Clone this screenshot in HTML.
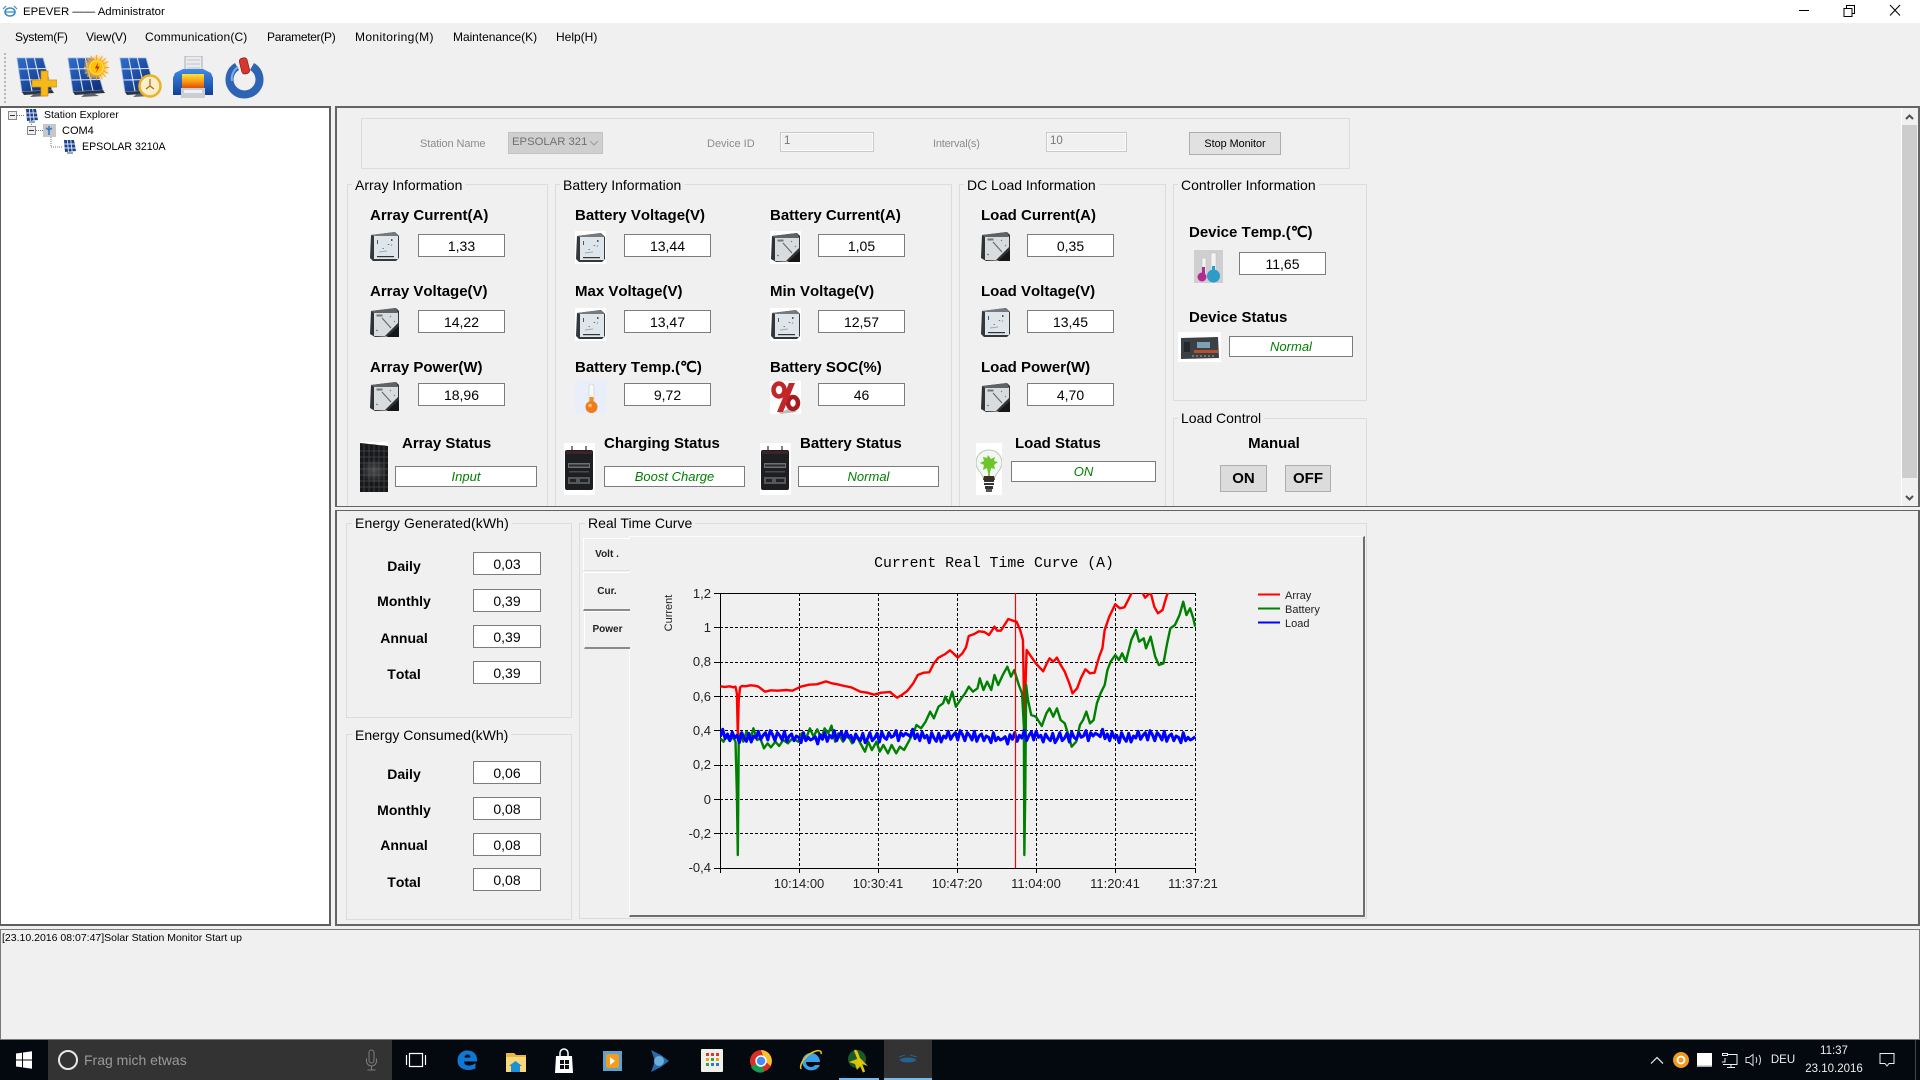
<!DOCTYPE html>
<html><head><meta charset="utf-8"><title>EPEVER — Administrator</title>
<style>
html,body{margin:0;padding:0;background:#f0f0f0}
#r{position:relative;width:1920px;height:1080px;overflow:hidden;background:#f0f0f0;font-family:"Liberation Sans",sans-serif;color:#000}
#r div,#r svg.a{position:absolute}
.t{white-space:nowrap;line-height:20px;height:20px}
.m{font-size:12px;top:27px}
.l{font-weight:bold;font-size:15px;white-space:nowrap;line-height:22px;height:20px;font-kerning:none}
.e{font-weight:bold;font-size:14px;white-space:nowrap;line-height:20px;height:20px;width:80px;left:364px;text-align:center;font-kerning:none}
.v{background:#fff;border:1px solid #7c7c7c;box-sizing:border-box;text-align:center;font-size:14px;height:23px;line-height:22px}
.s{background:#fff;border:1px solid #7c7c7c;box-sizing:border-box;text-align:center;font-size:13px;font-style:italic;color:#008000;height:21px;line-height:20px}
.g{border:1px solid #dcdcdc;box-sizing:border-box}
.gl{font-size:14px;background:#f0f0f0;padding:0 3px;line-height:18px;height:18px;white-space:nowrap}
.d{font-size:11px;color:#8c8c8c;white-space:nowrap;line-height:16px}
.btn{background:#e1e1e1;border:1px solid #adadad;box-sizing:border-box;text-align:center}
.tab{background:#f0f0f0;font-size:10px;font-weight:bold;color:#222;text-align:center;box-sizing:border-box}
</style></head><body>
<div id="r">
<svg width="0" height="0" style="position:absolute"><defs>
<linearGradient id="bl" x1="0" y1="0" x2="1" y2="1"><stop offset="0" stop-color="#2f6fd0"/><stop offset="1" stop-color="#0c2a72"/></linearGradient>
<linearGradient id="org" x1="0" y1="0" x2="0" y2="1"><stop offset="0" stop-color="#ffe23a"/><stop offset=".5" stop-color="#fb9a12"/><stop offset="1" stop-color="#d9430a"/></linearGradient>
<linearGradient id="pb" x1="0" y1="0" x2="0" y2="1"><stop offset="0" stop-color="#3f8ae6"/><stop offset="1" stop-color="#103f9a"/></linearGradient>
<radialGradient id="sun"><stop offset="0" stop-color="#ffd400"/><stop offset=".55" stop-color="#ffb000"/><stop offset="1" stop-color="#ffd9a0" stop-opacity=".2"/></radialGradient>
<clipPath id="pl"><rect x="720" y="593" width="476" height="276"/></clipPath>
<symbol id="sp" viewBox="0 0 41 40">
<polygon points="1,1 27,1 36,33 6,35" fill="url(#bl)" stroke="#9fb4d6" stroke-width=".8"/>
<path d="M9.7 1 16 34.4M18.3 1 26 33.7M2.7 12 30 11.5M4.3 23 33 22.5" stroke="#dbe6f6" stroke-width="1.1" fill="none"/>
<polygon points="6,35 36,33 38,36 8,38" fill="#2a3342"/><polygon points="18,37 26,36 32,39 14,40" fill="#5a6270"/>
</symbol>
<symbol id="msp" viewBox="0 0 14 14">
<polygon points="1,0 11,0 13,11 2,12" fill="#1c3f8f"/><path d="M4.3 0 5.5 12M7.7 0 9.2 12M1.3 4 11.8 4M1.6 8 12.5 8" stroke="#dfe8f6" stroke-width=".9"/><rect x="4" y="12" width="6" height="2" fill="#9aa"/>
</symbol>
<symbol id="m1" viewBox="0 0 29 29">
<polygon points="1,3 25,0 29,4 29,26 26,29 3,29 0,26" fill="#33383c"/><rect x="4" y="4" width="24" height="23" fill="#dfe6eb"/>
<polygon points="1,3 25,0 28,4 4,4" fill="#747a80"/><path d="M7 8h1v4H7zM12 17l1.5-1 .6 1zM17 13l2-1 .4 1zM21 7h1.5v2H21z" fill="#555"/><path d="M9 20l8-1M22 12l-1 2" stroke="#9ab" stroke-width="1"/>
<rect x="7" y="24" width="17" height="1.2" fill="#333"/>
</symbol>
<symbol id="m2" viewBox="0 0 29 29">
<polygon points="1,3 26,0 29,3 29,28 5,29 0,26" fill="#303336"/><polygon points="4,5 28,4 28,15 15,28 4,28" fill="#d9dcde"/>
<polygon points="1,3 26,0 28,5 4,5" fill="#5e6367"/><path d="M7 7h5v1H7zM6 22l2 1M20 8l1 1M24 13l1 1" stroke="#777" stroke-width="1"/>
<path d="M12 10 21 20" stroke="#666" stroke-width="1.1"/><polygon points="29,18 29,29 17,29" fill="#161616"/>
</symbol>
<symbol id="bat" viewBox="0 0 31 52">
<rect width="31" height="52" fill="#fff"/><path d="M8 3v5M22 3v5" stroke="#555" stroke-width="1.5"/><rect x="1" y="7" width="28" height="40" rx="2" fill="#1c1e22"/>
<rect x="2" y="8" width="26" height="3" fill="#3f2227"/><rect x="4" y="20" width="22" height="5" fill="#6c7074"/><rect x="5" y="21.500" width="20" height="2" fill="#2a2a2a"/><rect x="5" y="28" width="20" height="1.500" fill="#4a4a4a"/><rect x="4" y="34" width="22" height="7" fill="#55585b"/><rect x="6" y="36" width="6" height="3" fill="#222"/><rect x="16" y="36" width="8" height="3" fill="#222"/>
</symbol>
</defs></svg>

<!-- title bar -->
<div style="left:0;top:0;width:1920px;height:23px;background:#fff"></div>
<svg class="a" style="left:2px;top:5px" width="16" height="13" viewBox="0 0 16 13"><ellipse cx="8" cy="7" rx="5" ry="4" fill="none" stroke="#3a8ac4" stroke-width="1.6"/><path d="M1 4 4 1M15 4 12 1M3 7h10" stroke="#3a8ac4" stroke-width="1.2"/></svg>
<div class="t" style="left:23px;top:2px;font-size:11.400px">EPEVER —— Administrator</div>
<svg class="a" style="left:1795px;top:3px" width="120" height="16" viewBox="0 0 120 16"><path d="M4 7.5h10" stroke="#000"/><path d="M49 5.500v8h8v-8zM51.500 5.500v-3h8v8h-2.500" fill="none" stroke="#000"/><path d="M95 2 105 12.500M105 2 95 12.500" stroke="#000"/></svg>

<!-- menu -->
<div class="t m" style="left:15px;letter-spacing:-.3px">System(F)</div>
<div class="t m" style="left:86px;letter-spacing:-.15px">View(V)</div>
<div class="t m" style="left:145px;letter-spacing:.15px">Communication(C)</div>
<div class="t m" style="left:267px;letter-spacing:-.3px">Parameter(P)</div>
<div class="t m" style="left:355px;letter-spacing:.37px">Monitoring(M)</div>
<div class="t m" style="left:453px;letter-spacing:-.05px">Maintenance(K)</div>
<div class="t m" style="left:556px">Help(H)</div>

<!-- toolbar -->
<div style="left:4px;top:53px;height:50px;width:0;border-left:2px dotted #b8b8b8"></div>
<svg class="a" style="left:16px;top:57px" width="41" height="40"><use href="#sp"/><path d="M27 14h7v9h9v7h-9v9h-7v-9h-9v-7h9z" transform="translate(-2 0)" fill="#f7b81c" stroke="#c98a10" stroke-width=".7"/></svg>
<svg class="a" style="left:67px;top:57px" width="41" height="40"><use href="#sp"/></svg>
<svg class="a" style="left:83px;top:54px" width="27" height="27" viewBox="0 0 32 32"><circle cx="16" cy="16" r="15" fill="url(#sun)"/><g stroke="#f8a51c" stroke-width="1.1"><path d="M16 1v30M1 16h30M5 5l22 22M27 5 5 27M9 2l14 28M23 2 9 30M2 9l28 14M30 9 2 23"/></g><circle cx="16" cy="16" r="8" fill="#ffc400" stroke="#ffe680"/><path d="M18 10l-4 7h3l-2 5 5-7h-3z" fill="#c8261a"/></svg>
<svg class="a" style="left:119px;top:57px" width="41" height="40"><use href="#sp"/></svg>
<svg class="a" style="left:136px;top:72px" width="28" height="28"><circle cx="14" cy="14" r="10.500" fill="#fbeec8" stroke="#e8b22c" stroke-width="2.500"/><path d="M14 7v7l-4 3M14 14l4 3" stroke="#a06a20" stroke-width="1.200" fill="none"/></svg>
<svg class="a" style="left:172px;top:56px" width="42" height="43" viewBox="0 0 42 43"><rect x="13" y="0" width="17" height="19" fill="#e8eaec" stroke="#aab"/><path d="M15 4h13M15 8h13M15 12h13" stroke="#c4c4c4"/><path d="M3 17 11 13h20l8 4 2 5v17H1V22z" fill="url(#pb)"/><rect x="10" y="18" width="22" height="15" fill="url(#org)"/><rect x="9" y="32" width="24" height="10" fill="#c9ced1"/><rect x="12" y="34" width="18" height="3" fill="#eef"/></svg>
<svg class="a" style="left:225px;top:56px" width="40" height="43" viewBox="0 0 40 43"><path d="M12 10.500a15 15 0 1 0 15 0" fill="none" stroke="#2f63b4" stroke-width="8"/><path d="M13 11a14 14 0 0 0-6 14" fill="none" stroke="#7eaee8" stroke-width="2"/><rect x="15.500" y="2" width="8" height="16" rx="3" transform="rotate(-14 19 10)" fill="#d6362c" stroke="#8c1a14" stroke-width=".7"/></svg>

<!-- left tree -->
<div style="left:0;top:106px;width:331px;height:820px;background:#fff;border:1px solid #5f5f5f;border-width:2px 2px 2px 1px;box-sizing:border-box"></div>
<svg class="a" style="left:0;top:106px" width="100" height="50" viewBox="0 0 100 50">
<rect x="8.500" y="5.500" width="8" height="8" fill="#eee" stroke="#8a8a8a"/><path d="M10 9.500h5" stroke="#333"/>
<rect x="27.500" y="20.500" width="8" height="8" fill="#eee" stroke="#8a8a8a"/><path d="M29 24.500h5" stroke="#333"/>
<path d="M17 9.500h7M31.500 14v6M36 24.500h7M51 31v10h11" stroke="#777" stroke-dasharray="1 1" fill="none"/>
<rect x="43" y="18" width="13" height="13" fill="#c7c7c7"/><path d="M49 20v9M46 22l3 2 3-2" stroke="#3b7cc0" stroke-width="1.600" fill="none"/>
</svg>
<svg class="a" style="left:25px;top:109px" width="14" height="14"><use href="#msp"/></svg>
<svg class="a" style="left:63px;top:140px" width="14" height="14"><use href="#msp"/></svg>
<div class="t" style="left:44px;top:105px;font-size:10.500px">Station Explorer</div>
<div class="t" style="left:62px;top:121px;font-size:11px">COM4</div>
<div class="t" style="left:82px;top:137px;font-size:10.600px">EPSOLAR 3210A</div>

<!-- right top panel -->
<div style="left:335px;top:106px;width:1585px;height:401px;border:2px solid #646464;border-width:2px 2px 1px 2px;box-sizing:border-box"></div>
<div style="left:335px;top:510px;width:1585px;height:416px;border:2px solid #646464;border-width:1px 2px 2px 2px;box-sizing:border-box"></div>
<!-- scrollbar -->
<div style="left:1901px;top:108px;width:16px;height:398px;background:#f0f0f0;border-left:1px solid #fff"></div>
<div style="left:1902px;top:125px;width:15px;height:353px;background:#cdcdcd"></div>
<svg class="a" style="left:1902px;top:108px" width="15" height="398"><path d="M4 11 7.500 7.500 11 11" fill="none" stroke="#505050" stroke-width="2"/><path d="M4 388 7.500 391.500 11 388" fill="none" stroke="#505050" stroke-width="2"/></svg>

<!-- station bar -->
<div class="g" style="left:361px;top:118px;width:989px;height:51px"></div>
<div class="d" style="left:420px;top:136px;letter-spacing:-.1px">Station Name</div>
<div style="left:508px;top:132px;width:95px;height:22px;background:#cfcfcf;border:1px solid #c2c2c2;box-sizing:border-box;font-size:11.300px;line-height:19px;color:#707070;padding-left:3px">EPSOLAR 321</div>
<svg class="a" style="left:589px;top:140px" width="10" height="7"><path d="M1 1 5 5 9 1" fill="none" stroke="#9a9a9a"/></svg>
<div class="d" style="left:707px;top:136px">Device ID</div>
<div style="left:780px;top:132px;width:94px;height:20px;background:#f0f0f0;border:1px solid #c9c9c9;box-shadow:inset 0 0 0 1px #fafafa;box-sizing:border-box;font-size:11.500px;line-height:17px;color:#777;padding-left:3px">1</div>
<div class="d" style="left:933px;top:136px;letter-spacing:-.2px">Interval(s)</div>
<div style="left:1046px;top:132px;width:81px;height:20px;background:#f0f0f0;border:1px solid #c9c9c9;box-shadow:inset 0 0 0 1px #fafafa;box-sizing:border-box;font-size:11.500px;line-height:17px;color:#777;padding-left:3px">10</div>
<div class="btn" style="left:1189px;top:132px;width:92px;height:23px;font-size:10.800px;line-height:22px">Stop Monitor</div>

<!-- groups top -->
<div class="g" style="left:347px;top:184px;width:201px;height:322px;border-bottom:none"></div>
<div class="gl" style="left:352px;top:176px">Array Information</div>
<div class="g" style="left:555px;top:184px;width:397px;height:322px;border-bottom:none"></div>
<div class="gl" style="left:560px;top:176px">Battery Information</div>
<div class="g" style="left:959px;top:184px;width:207px;height:322px;border-bottom:none"></div>
<div class="gl" style="left:964px;top:176px;letter-spacing:-.03px">DC Load Information</div>
<div class="g" style="left:1173px;top:184px;width:194px;height:217px"></div>
<div class="gl" style="left:1178px;top:176px">Controller Information</div>
<div class="g" style="left:1173px;top:418px;width:194px;height:88px;border-bottom:none"></div>
<div class="gl" style="left:1178px;top:409px">Load Control</div>

<!-- array -->
<div class="l" style="left:370px;top:205px">Array Current(A)</div>
<svg class="a" style="left:370px;top:232px" width="29" height="29"><use href="#m1"/></svg>
<div class="v" style="left:418px;top:234px;width:87px">1,33</div>
<div class="l" style="left:370px;top:281px">Array Voltage(V)</div>
<svg class="a" style="left:370px;top:308px" width="29" height="29"><use href="#m2"/></svg>
<div class="v" style="left:418px;top:310px;width:87px">14,22</div>
<div class="l" style="left:370px;top:357px">Array Power(W)</div>
<svg class="a" style="left:370px;top:382px" width="29" height="29"><use href="#m2"/></svg>
<div class="v" style="left:418px;top:383px;width:87px">18,96</div>
<div class="l" style="left:402px;top:433px">Array Status</div>
<svg class="a" style="left:360px;top:442px" width="28" height="50" viewBox="0 0 28 50"><defs><radialGradient id="gl" cx=".5" cy=".55" r=".5"><stop offset="0" stop-color="#777" stop-opacity=".55"/><stop offset="1" stop-color="#777" stop-opacity="0"/></radialGradient></defs><rect width="28" height="50" fill="#fff"/><polygon points="0,1 28,4 28,50 0,50" fill="#17181a"/><path d="M0 9h28M0 15h28M0 21h28M0 27h28M0 33h28M0 39h28M0 45h28M4 1v49M9 2v48M14 2v48M19 3v47M24 3v47" stroke="#45484c" stroke-width=".8"/><rect y="15" width="28" height="25" fill="url(#gl)"/></svg>
<div class="s" style="left:395px;top:466px;width:142px">Input</div>

<!-- battery -->
<div class="l" style="left:575px;top:205px">Battery Voltage(V)</div>
<svg class="a" style="left:575px;top:231px" width="31" height="33"><rect width="31" height="33" fill="#fff"/><use href="#m1" x="1" y="2" width="29" height="29"/></svg>
<div class="v" style="left:624px;top:234px;width:87px">13,44</div>
<div class="l" style="left:770px;top:205px">Battery Current(A)</div>
<svg class="a" style="left:770px;top:231px" width="31" height="33"><rect width="31" height="33" fill="#fff"/><use href="#m2" x="1" y="2" width="29" height="29"/></svg>
<div class="v" style="left:818px;top:234px;width:87px">1,05</div>
<div class="l" style="left:575px;top:281px">Max Voltage(V)</div>
<svg class="a" style="left:575px;top:308px" width="31" height="33"><rect width="31" height="33" fill="#fff"/><use href="#m1" x="1" y="2" width="29" height="29"/></svg>
<div class="v" style="left:624px;top:310px;width:87px">13,47</div>
<div class="l" style="left:770px;top:281px">Min Voltage(V)</div>
<svg class="a" style="left:770px;top:308px" width="31" height="33"><rect width="31" height="33" fill="#fff"/><use href="#m1" x="1" y="2" width="29" height="29"/></svg>
<div class="v" style="left:818px;top:310px;width:87px">12,57</div>
<div class="l" style="left:575px;top:357px">Battery Temp.(℃)</div>
<svg class="a" style="left:575px;top:381px" width="31" height="33" viewBox="0 0 31 33"><rect width="31" height="33" fill="#e9effa"/><rect x="14" y="3" width="5" height="21" rx="2.500" fill="#f8f8f8" stroke="#c9c9c9" stroke-width=".6"/><rect x="14.500" y="16" width="4" height="9" fill="#f58a1e"/><circle cx="16.500" cy="26" r="6" fill="#f27a18"/><circle cx="15" cy="24.500" r="1.800" fill="#ffc27a"/></svg>
<div class="v" style="left:624px;top:383px;width:87px">9,72</div>
<div class="l" style="left:770px;top:357px">Battery SOC(%)</div>
<svg class="a" style="left:770px;top:381px" width="31" height="33" viewBox="0 0 31 33"><rect width="31" height="33" fill="#fff"/><polygon points="12,31 8,31 11,33 27,31 20,27" fill="#8f8f8f" opacity=".6"/><ellipse cx="9" cy="9" rx="5.500" ry="6.500" fill="none" stroke="#c2262a" stroke-width="4.500"/><ellipse cx="23" cy="22" rx="5" ry="6" fill="none" stroke="#a81c20" stroke-width="4.500"/><polygon points="19,2 25,2 13,31 7,31" fill="#c2262a"/></svg>
<div class="v" style="left:818px;top:383px;width:87px">46</div>
<div class="l" style="left:604px;top:433px">Charging Status</div>
<svg class="a" style="left:564px;top:443px" width="31" height="52"><use href="#bat"/></svg>
<div class="s" style="left:604px;top:466px;width:141px">Boost Charge</div>
<div class="l" style="left:800px;top:433px">Battery Status</div>
<svg class="a" style="left:760px;top:443px" width="31" height="52"><use href="#bat"/></svg>
<div class="s" style="left:798px;top:466px;width:141px">Normal</div>

<!-- load -->
<div class="l" style="left:981px;top:205px">Load Current(A)</div>
<svg class="a" style="left:981px;top:232px" width="29" height="29"><use href="#m2"/></svg>
<div class="v" style="left:1027px;top:234px;width:87px">0,35</div>
<div class="l" style="left:981px;top:281px">Load Voltage(V)</div>
<svg class="a" style="left:981px;top:308px" width="29" height="29"><use href="#m1"/></svg>
<div class="v" style="left:1027px;top:310px;width:87px">13,45</div>
<div class="l" style="left:981px;top:357px">Load Power(W)</div>
<svg class="a" style="left:981px;top:383px" width="29" height="29"><use href="#m2"/></svg>
<div class="v" style="left:1027px;top:383px;width:87px">4,70</div>
<div class="l" style="left:1015px;top:433px">Load Status</div>
<svg class="a" style="left:976px;top:443px" width="26" height="52" viewBox="0 0 26 52"><rect width="26" height="52" fill="#fff"/><path d="M13 7C5 7 0 13 0 20c0 7 7 10 8 17h10c1-7 8-10 8-17 0-7-5-13-13-13z" fill="#f2f7f2" stroke="#b9c9bc"/><path d="M13 36V22" stroke="#5a3" stroke-width="1.500"/><path d="M12 12l3 4 4-2-1 4 4 1-4 3 1 4-4-1-1 5h-2l-1-5-4 2 1-5-4-2 4-2-1-4 4 1z" fill="#6cc52a"/><path d="M8 37h10v2H8zM8 40h10v2H8zM9 43h8v3H9z" fill="#333"/><rect x="10" y="46" width="6" height="3" fill="#555"/><path d="M8 33h10l1 4H7z" fill="#3a2c20"/></svg>
<div class="s" style="left:1011px;top:461px;width:145px">ON</div>

<!-- controller -->
<div class="l" style="left:1189px;top:222px">Device Temp.(℃)</div>
<svg class="a" style="left:1194px;top:250px" width="29" height="33" viewBox="0 0 29 33"><rect width="29" height="33" fill="#cfcfcf"/><rect x="8" y="8" width="4" height="16" fill="#f3f3f3" stroke="#bbb" stroke-width=".5"/><rect x="17" y="3" width="5" height="20" fill="#f3f3f3" stroke="#bbb" stroke-width=".5"/><circle cx="8" cy="27" r="4.500" fill="#b52a92"/><rect x="8" y="17" width="3" height="8" fill="#b52a92"/><circle cx="19.500" cy="26" r="6.500" fill="#2e9cc8"/><rect x="18" y="16" width="3" height="8" fill="#2e9cc8"/></svg>
<div class="v" style="left:1239px;top:252px;width:87px">11,65</div>
<div class="l" style="left:1189px;top:307px">Device Status</div>
<svg class="a" style="left:1178px;top:332px" width="43" height="30" viewBox="0 0 43 30"><rect width="43" height="30" fill="#fff"/><polygon points="3,6 40,5 41,26 3,27" fill="#3a4044"/><rect x="19" y="10" width="13" height="6" fill="#7f9fb2"/><rect x="16" y="18" width="24" height="3" fill="#b5502a"/><rect x="6" y="10" width="6" height="10" fill="#23282b"/><path d="M14 24h22" stroke="#aaa" stroke-dasharray="2 2"/></svg>
<div class="s" style="left:1229px;top:336px;width:124px">Normal</div>
<div class="l" style="left:1234px;top:433px;width:80px;text-align:center">Manual</div>
<div class="btn l" style="left:1220px;top:465px;width:47px;height:27px;line-height:26px;background:#dcdcdc">ON</div>
<div class="btn l" style="left:1285px;top:465px;width:46px;height:27px;line-height:26px;background:#dcdcdc">OFF</div>

<!-- energy -->
<div class="g" style="left:346px;top:523px;width:226px;height:195px"></div>
<div class="gl" style="left:352px;top:514px;letter-spacing:.1px">Energy Generated(kWh)</div>
<div class="e" style="top:556px">Daily</div><div class="v" style="left:473px;top:552px;width:68px">0,03</div>
<div class="e" style="top:591px">Monthly</div><div class="v" style="left:473px;top:589px;width:68px">0,39</div>
<div class="e" style="top:628px">Annual</div><div class="v" style="left:473px;top:625px;width:68px">0,39</div>
<div class="e" style="top:664px">Total</div><div class="v" style="left:473px;top:661px;width:68px">0,39</div>
<div class="g" style="left:346px;top:734px;width:226px;height:186px"></div>
<div class="gl" style="left:352px;top:726px">Energy Consumed(kWh)</div>
<div class="e" style="top:764px">Daily</div><div class="v" style="left:473px;top:761px;width:68px">0,06</div>
<div class="e" style="top:800px">Monthly</div><div class="v" style="left:473px;top:797px;width:68px">0,08</div>
<div class="e" style="top:835px">Annual</div><div class="v" style="left:473px;top:833px;width:68px">0,08</div>
<div class="e" style="top:872px">Total</div><div class="v" style="left:473px;top:868px;width:68px">0,08</div>

<!-- real time -->
<div class="g" style="left:579px;top:523px;width:788px;height:396px"></div>
<div class="gl" style="left:585px;top:514px">Real Time Curve</div>
<div style="left:629px;top:536px;width:736px;height:381px;background:#f0f0f0;border:1px solid;border-color:#fcfcfc #6e6e6e #6e6e6e #fcfcfc;border-width:1px 2px 2px 1px;box-sizing:border-box"></div>
<div class="tab" style="left:583px;top:538px;width:47px;height:33px;line-height:32px;border:1px solid #fff;border-right:none;border-bottom-color:#e0e0e0">Volt .</div>
<div class="tab" style="left:583px;top:572px;width:47px;height:39px;line-height:37px;border:1px solid #fff;border-right:none;border-bottom:2px solid #8a8a8a">Cur.</div>
<div class="tab" style="left:584px;top:611px;width:46px;height:38px;line-height:36px;border:1px solid #fff;border-right:none;border-bottom:2px solid #8a8a8a">Power</div>

<!-- chart -->
<svg class="a" style="left:0;top:0" width="1920" height="1080" viewBox="0 0 1920 1080">
<text x="994" y="567" text-anchor="middle" font-family="Liberation Mono,monospace" font-size="14.800">Current Real Time Curve (A)</text>
<text transform="translate(672 613) rotate(-90)" text-anchor="middle" font-family="Liberation Sans,sans-serif" font-size="11" fill="#222">Current</text>
<g stroke="#000" stroke-width="1" stroke-dasharray="3 2" fill="none">
<path d="M720 627.500H1196M720 662.500H1196M720 696.500H1196M720 730.500H1196M720 765.500H1196M720 799.500H1196M720 833.500H1196"/>
<path d="M799.500 593V868M878.500 593V868M957.500 593V868M1036.500 593V868M1115.500 593V868M1195.500 593V868"/>
</g>
<path d="M720.500 593V868.500H1196M720.500 593.500H1196M714 593.500h6M714 627.500h6M714 662.500h6M714 696.500h6M714 730.500h6M714 765.500h6M714 799.500h6M714 833.500h6M714 868.500h6M720.500 868v5M799.500 868v5M878.500 868v5M957.500 868v5M1036.500 868v5M1115.500 868v5M1195.500 868v5" stroke="#000" fill="none"/>
<g font-family="Liberation Sans,sans-serif" font-size="13" text-anchor="end" fill="#222">
<text x="711" y="598">1,2</text><text x="711" y="632">1</text><text x="711" y="666">0,8</text><text x="711" y="701">0,6</text><text x="711" y="735">0,4</text><text x="711" y="769">0,2</text><text x="711" y="804">0</text><text x="711" y="838">-0,2</text><text x="711" y="872">-0,4</text>
</g>
<g font-family="Liberation Sans,sans-serif" font-size="13" text-anchor="middle" fill="#222">
<text x="799" y="888">10:14:00</text><text x="878" y="888">10:30:41</text><text x="957" y="888">10:47:20</text><text x="1036" y="888">11:04:00</text><text x="1115" y="888">11:20:41</text><text x="1193" y="888">11:37:21</text>
</g>
<g clip-path="url(#pl)"><g transform="translate(640 560) scale(.45918 .33333)" fill="none" stroke-linejoin="round">
<path vector-effect="non-scaling-stroke" stroke="#ff0000" stroke-width="2.400" d="M175 379 185 381 195 379 203 382 208 380 211 400 213 525 215 420 218 382 222 378 230 379 240 376 250 377 258 380 272 395 285 391 300 392 318 390 332 392 350 380 368 374 385 373 392 370 405 364 418 370 430 373 445 378 460 382 480 395 495 398 510 404 525 398 545 396 552 405 560 413 570 405 582 393 595 370 605 345 618 338 630 337 640 310 650 293 665 282 675 271 684 282 692 293 702 280 710 262 716 228 728 222 738 214 750 216 760 225 772 200 778 212 786 212 802 177 812 182 820 185 828 210 834 240 836 400 837 525 839 400 842 270 852 290 862 310 878 334 886 310 892 295 900 305 908 293 915 312 925 335 935 370 942 400 952 385 960 355 970 328 980 340 990 338 1000 290 1007 265 1012 210 1022 170 1035 133 1045 145 1055 142 1065 115 1072 95 1090 88 1100 113 1112 97 1120 140 1128 160 1138 150 1146 112 1152 90"/>
<path vector-effect="non-scaling-stroke" stroke="#008000" stroke-width="2.400" d="M175 535 182 545 188 528 195 542 203 532 208 545 211 700 213 885 215 540 219 520 225 545 232 515 240 540 247 505 255 540 262 535 270 565 278 550 285 562 295 545 303 558 312 540 322 550 332 535 345 545 352 520 362 535 370 505 378 530 386 508 395 535 402 505 410 520 417 497 425 545 432 520 442 545 452 525 462 550 472 530 482 555 490 575 497 545 505 570 515 545 522 575 530 555 540 580 548 555 558 580 566 560 575 570 585 545 598 510 602 495 612 505 622 485 632 455 640 475 650 440 660 430 665 410 672 430 680 395 688 440 695 425 700 415 708 400 716 380 725 395 735 385 740 355 748 390 756 365 765 390 772 345 780 375 790 345 800 320 808 350 815 330 825 375 832 400 836 500 837 885 839 700 841 375 845 420 852 465 862 470 875 498 885 460 892 445 900 470 908 445 916 480 925 490 932 520 940 560 950 545 958 495 965 480 972 455 980 490 988 480 995 430 1003 400 1012 375 1018 330 1025 305 1035 285 1043 300 1050 280 1058 305 1070 240 1080 210 1087 245 1097 235 1102 265 1112 230 1122 290 1130 315 1140 310 1148 250 1155 205 1165 195 1175 165 1183 125 1190 165 1198 145 1205 175 1209 200"/>
<path vector-effect="non-scaling-stroke" stroke="#0000ff" stroke-width="3" d="M175 530l5.170-22 5.170 28 5.170-14 5.170 20 5.170-26 5.170 18 5.170-8 5.170 22 5.170-30 5.170 16 5.170 10 5.170-24 5.170 26 5.170-18 5.170 6 5.170-20 5.170 24 5.170-12 5.170-8 5.170 22 5.170-28 5.170 12 5.170 18 5.170-24 5.170 8 5.170 14 5.170-26 5.170 30 5.170-16 5.170-6 5.170 20 5.170-14 5.170 4 5.170 16 5.170-30 5.170 24 5.170-10 5.170 8 5.170-4 5.170-6
l5.170 22 5.170-28 5.170 14 5.170-20 5.170 26 5.170-18 5.170 8 5.170-22 5.170 30 5.170-16 5.170-10 5.170 24 5.170-26 5.170 18 5.170-6 5.170 20 5.170-24 5.170 12 5.170 8 5.170-22 5.170 28 5.170-12 5.170-18 5.170 24 5.170-8 5.170-14 5.170 26 5.170-30 5.170 16 5.170 6 5.170-20 5.170 14 5.170-4 5.170-16 5.170 30 5.170-24 5.170 10 5.170-8 5.170 4 5.170 6
l5.170-22 5.170 28 5.170-14 5.170 20 5.170-26 5.170 18 5.170-8 5.170 22 5.170-30 5.170 16 5.170 10 5.170-24 5.170 26 5.170-18 5.170 6 5.170-20 5.170 24 5.170-12 5.170-8 5.170 22 5.170-28 5.170 12 5.170 18 5.170-24 5.170 8 5.170 14 5.170-26 5.170 30 5.170-16 5.170-6 5.170 20 5.170-14 5.170 4 5.170 16 5.170-30 5.170 24 5.170-10 5.170 8 5.170-4 5.170-6
l5.170 22 5.170-28 5.170 14 5.170-20 5.170 26 5.170-18 5.170 8 5.170-22 5.170 30 5.170-16 5.170-10 5.170 24 5.170-26 5.170 18 5.170-6 5.170 20 5.170-24 5.170 12 5.170 8 5.170-22 5.170 28 5.170-12 5.170-18 5.170 24 5.170-8 5.170-14 5.170 26 5.170-30 5.170 16 5.170 6 5.170-20 5.170 14 5.170-4 5.170-16 5.170 30 5.170-24 5.170 10 5.170-8 5.170 4 5.170 6
l5.170-22 5.170 28 5.170-14 5.170 20 5.170-26 5.170 18 5.170-8 5.170 22 5.170-30 5.170 16 5.170 10 5.170-24 5.170 26 5.170-18 5.170 6 5.170-20 5.170 24 5.170-12 5.170-8 5.170 22 5.170-28 5.170 12 5.170 18 5.170-24 5.170 8 5.170 14 5.170-26 5.170 30 5.170-16 5.170-6 5.170 20 5.170-14 5.170 4 5.170 16 5.170-30 5.170 24 5.170-10 5.170 8 5.170-4 5.170-6"/>
</g></g>
<path d="M1015.500 593V868" stroke="#ff0000" stroke-width="1.200"/>
<path d="M1258 594.500h22" stroke="#ff0000" stroke-width="2"/><path d="M1258 608.500h22" stroke="#008000" stroke-width="2"/><path d="M1258 622.500h22" stroke="#0000ff" stroke-width="2"/>
<g font-family="Liberation Sans,sans-serif" font-size="11" fill="#222"><text x="1285" y="599">Array</text><text x="1285" y="613">Battery</text><text x="1285" y="627">Load</text></g>
</svg>

<!-- log -->
<div style="left:0;top:929px;width:1920px;height:111px;background:#f0f0f0;border:1px solid #7a7a7a;border-width:1px 1px 1px 1px;box-sizing:border-box"></div>
<div class="t" style="left:2px;top:928px;font-size:10.500px">[23.10.2016 08:07:47]Solar Station Monitor Start up</div>

<!-- taskbar -->
<div style="left:0;top:1040px;width:1920px;height:40px;background:#03090f"></div>
<div style="left:48px;top:1040px;width:344px;height:40px;background:#333"></div>
<div style="left:884px;top:1040px;width:48px;height:40px;background:#333"></div>
<div style="left:839px;top:1078px;width:40px;height:2px;background:#76b9ed"></div>
<div style="left:884px;top:1078px;width:48px;height:2px;background:#76b9ed"></div>
<div class="t" style="left:84px;top:1050px;font-size:14px;color:#9a9a9a">Frag mich etwas</div>
<svg class="a" style="left:0;top:1040px" width="960" height="40" viewBox="0 0 960 40">
<path d="M16 13.500l6-.8v6.800h-6zM23 12.500l9-1.200v8.200h-9zM16 20.500h6v6.800l-6-.8zM23 20.500h9v8.200l-9-1.200z" fill="#fff"/>
<circle cx="68" cy="20" r="9" fill="none" stroke="#e8e8e8" stroke-width="2"/>
<path d="M369 12.500a2.500 2.500 0 0 1 5 0v8a2.500 2.500 0 0 1-5 0zM366.500 18.500v2.500a5 5 0 0 0 10 0v-2.500M371.500 26v3.500M367.500 30h8" fill="none" stroke="#7e7e7e"/>
<path d="M406.500 15v10M425.500 15v10M409.500 13.500h13v13h-13z" fill="none" stroke="#fff" stroke-width="1.200"/>
<path d="M467 11c6 0 10 3.500 9.500 10h-13c0 3 1.500 5 5 5 2 0 4.500-.7 6.500-2v4c-2 1-4.500 1.500-7 1.500-6 0-10-3.500-10-9s4-9.500 9-9.500zM463.800 18h7.200c0-2.500-1.400-4-3.300-4s-3.500 1.500-3.900 4z" fill="#0f78d4" stroke="#0f78d4"/>
<path d="M506 13h8l2 2h10v17h-20z" fill="#f9d77a"/><path d="M506 17h20v-2h-10l-2-2h-8z" fill="#e9b83a"/><rect x="511" y="24" width="9" height="8" fill="#1e90d8"/><path d="M509 26l6.500-5 6.500 5" fill="#1e90d8"/>
<path d="M556 16h16l1 17h-18z" fill="#fff"/><path d="M560 16v-3a4 4 0 0 1 8 0v3" fill="none" stroke="#fff" stroke-width="1.500"/><path d="M560 20h4v4h-4zM565 20h4v4h-4zM560 25h4v4h-4zM565 25h4v4h-4z" fill="#111"/>
<rect x="603" y="11" width="19" height="20" fill="#5fa2cf"/><rect x="606" y="14" width="13" height="14" rx="2" fill="#f49c1c"/><path d="M610 17l5 4-5 4z" fill="#fff"/>
<path d="M651 10l10 5 8 6-8 6-10 5 4-11z" fill="#2a6aa8"/><circle cx="659" cy="21" r="5" fill="#6aaedf"/>
<rect x="701" y="9" width="22" height="23" rx="1" fill="#f0f0ea"/><path d="M706 13h3v3h-3zM711 13h3v3h-3zM716 13h3v3h-3z" fill="#d8372a"/><path d="M706 18h3v3h-3zM716 18h3v3h-3z" fill="#e8a018"/><path d="M711 18h3v3h-3zM706 23h3v3h-3z" fill="#3ca23a"/><path d="M711 23h3v3h-3zM716 23h3v3h-3z" fill="#2a7ad0"/>
<circle cx="761" cy="21" r="11" fill="#d93025"/><path d="M761 21 751 27a11 11 0 0 0 13 5z" fill="#1a9a4c"/><path d="M761 10a11 11 0 0 1 9.600 16L765 21z" fill="#fbc02d"/><circle cx="761" cy="21" r="5" fill="#4a8cf0" stroke="#fff" stroke-width="1.500"/>
<path d="M811 13a9 9 0 0 1 9 9h-14a5 5 0 0 0 9 3h5a9.500 9.500 0 0 1-18-3 9 9 0 0 1 9-9z" fill="#3aa0e8"/><path d="M801 29c-2-5 5-15 15-18 3-1 6 0 5 3" fill="none" stroke="#f2c21a" stroke-width="1.500"/>
<circle cx="857" cy="19" r="9" fill="#1a5a28"/><path d="M857 10l3 8 8 8-6-2-5 6-2-6-6-2 8-3z" fill="#d8c20a"/><path d="M855 10l9 22" stroke="#e2c80a" stroke-width="2.500"/>
<ellipse cx="908" cy="20" rx="8" ry="2.500" fill="#24628f"/><path d="M899 17l6-2M910 15l7 2" stroke="#24628f"/>
</svg>
<svg class="a" style="left:1640px;top:1040px" width="280" height="40" viewBox="0 0 280 40">
<path d="M11 23.500 17 17.500 23 23.500" fill="none" stroke="#ddd" stroke-width="1.300"/>
<circle cx="41" cy="20" r="8" fill="#f29a1e"/><circle cx="41" cy="20" r="3.500" fill="none" stroke="#fff" stroke-width="1.800"/>
<rect x="57" y="13" width="15" height="14" fill="#fff"/><rect x="57" y="25.500" width="15" height="1.500" fill="#aaa"/>
<path d="M82.500 15.500h5v-2h-5zM85 18v4h-3M88 14.500h9v10h-14M91 24.500v3M87 27.500h8" fill="none" stroke="#eee"/>
<path d="M106 17.500h3l4-3v11l-4-3h-3zM116 17c1 2 1 4 0 6M119 15c2 3 2 7 0 10" fill="none" stroke="#ddd"/>
<path d="M240 13.500h14v10h-5l-2 2.500-2-2.500h-5z" fill="none" stroke="#eee"/>
<path d="M275.500 0v40" stroke="#444"/>
</svg>
<div class="t" style="left:1768px;top:1050px;font-size:11.500px;color:#eee;width:30px;text-align:center">DEU</div>
<div class="t" style="left:1800px;top:1041px;font-size:11.500px;color:#eee;width:68px;text-align:center">11:37</div>
<div class="t" style="left:1800px;top:1059px;font-size:11.500px;color:#eee;width:68px;text-align:center">23.10.2016</div>
</div>
</body></html>
